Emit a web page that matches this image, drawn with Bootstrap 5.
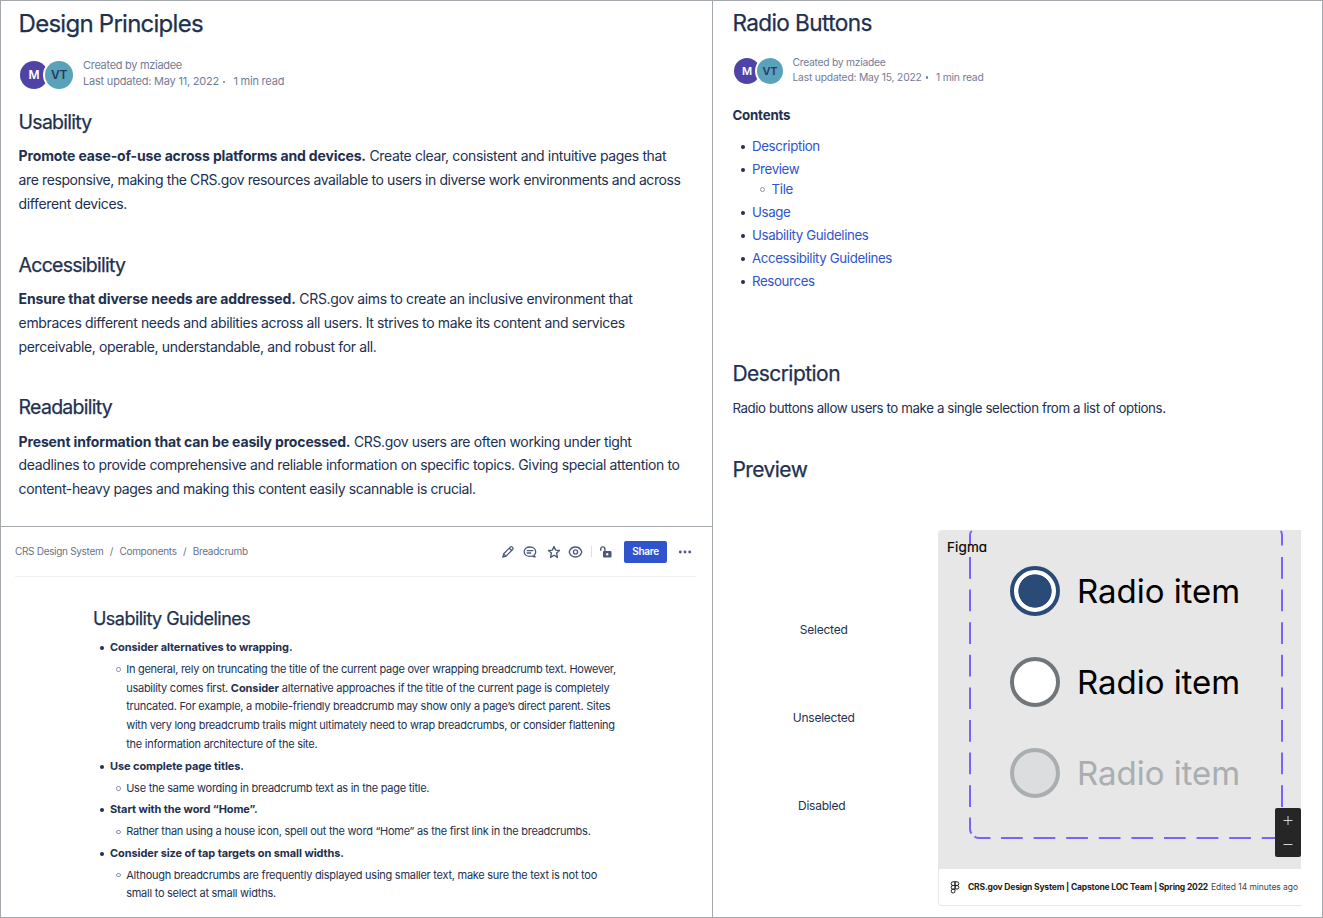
<!DOCTYPE html>
<html lang="en">
<head>
<meta charset="utf-8">
<meta name="viewport" content="width=device-width, initial-scale=1">
<title>CRS Design System</title>
<link href="https://cdn.jsdelivr.net/npm/bootstrap@5.3.0/dist/css/bootstrap.min.css" rel="stylesheet">
<style>
:root{--ink:#22304f;--muted-ink:#737c95;--rule:#a3a9ac;--blue:#2f54cc}
body{font-family:Inter,"Liberation Sans",sans-serif;color:var(--ink);background:#fff}
.board{width:1323px;height:918px;border:1px solid var(--rule);grid-template-columns:712px 1fr;overflow:hidden}
.board p,.board h1,.board h2,.board ul{margin:0}
.pane-left{border-right:1px solid var(--rule)}
.board h1,.board h2{font-weight:400;-webkit-text-stroke:.25px currentColor}
.principles{height:526px;padding:9px 0 0 17.6px;border-bottom:1px solid var(--rule)}
.principles h1{font-size:24px;line-height:28px;letter-spacing:-.031em}
.principles h2{font-size:19.5px;line-height:28px;letter-spacing:-.038em}
.principles section{height:142.7px}
.principles section p{font-size:14px;line-height:23.9px;letter-spacing:-.0255em;padding-top:8.2px;white-space:nowrap}
.principles .snug{letter-spacing:-.0286em}
.principles b{letter-spacing:-.0105em}
.people{height:30px}
.who{width:28px;height:28px;border-radius:50%;font-size:12px;font-weight:600;background:#5aa1ba;color:#243a5e;box-shadow:0 0 0 2px #fff;letter-spacing:-.02em}
.who-m{background:#4f44a6;color:#fff}
.who+.who{margin-left:-3px}
.byline{font-size:11px;line-height:16px;letter-spacing:-.019em;color:var(--muted-ink);white-space:nowrap;margin:-4px 0 0 10px}
.byline .maker{letter-spacing:-.027em}
.dot{display:inline-block;width:2.4px;height:2.4px;border-radius:50%;background:currentColor;margin:0 8px 2px 4px}

.crumb-page{height:390px}
.crumb-bar{height:50px;margin:0 16px 0 14px;border-bottom:1px solid #f0f1f3}
.crumbs{font-size:10px;letter-spacing:-.031em;color:#6a7389}
.crumbs .sep{margin:0 6.4px}
.tools{color:#4b5878}
.tools svg{display:block}
.btn-share{width:43px;height:22px;padding:0;border-radius:2px;border:0;font-size:10px;font-weight:600;letter-spacing:-.031em;background:var(--blue);color:#fff}
.guides{padding:28px 0 0 92px}
.guides h2{font-size:18px;line-height:28px;letter-spacing:-.0295em}
.guides ul{list-style:none;padding:0}
.guides li{position:relative}
.guides>ul{padding-left:17px;padding-top:5px;font-size:11px;line-height:18.86px;letter-spacing:-.0238em;white-space:nowrap}
.guides b{letter-spacing:-.0082em}
.guides ul ul{padding:2.9px 0 2.83px 16.2px}
.bul::before{content:"";position:absolute;left:-10px;top:8px;width:4px;height:4px;border-radius:50%;background:var(--ink)}
.ring::before{content:"";position:absolute;left:-10px;top:7.5px;width:4.4px;height:4.4px;border-radius:50%;border:.8px solid #8c94a6}

.radio-page{padding:8px 0 0 19.4px}
.radio-page h1{font-size:22.6px;line-height:28px;letter-spacing:-.027em}
.radio-page h2{font-size:21px;line-height:28px;letter-spacing:-.026em}
.radio-page .who{width:26px;height:26px;font-size:11px}
.radio-page .byline{font-size:10.3px;line-height:14.8px;margin:-1px 0 0 9.5px}
.radio-page .byline .maker{letter-spacing:-.0252em}
.contents{font-size:13.3px;letter-spacing:-.028em}
.contents b{display:block;line-height:20px;letter-spacing:-.0135em}
.contents ul{list-style:none;padding:0 0 0 19.6px;line-height:20px}
.contents li{position:relative;padding-bottom:3px}
.contents ul ul li{padding:0}
.contents .ring::before{left:-12px;top:8px;width:5px;height:5px}
.contents .bul::before{left:-11px;top:8.6px;width:4px;height:4px}
.contents a{color:var(--blue);text-decoration:none}
.state-names{width:205.6px;padding-right:23px;font-size:12px;letter-spacing:-.02em;padding-top:89.6px}
.state-names div{line-height:20px;height:88.3px;text-align:center}
.embed{width:363px;height:376px;border:solid #e6e7e8;border-width:0 0 1px 1px;border-radius:4px 0 0 4px;overflow:hidden}
.stage{height:339px;background:#e7e7e7;padding:36px 0 0 72px;margin-left:-1px}
.stage .selection{position:absolute;left:0;top:0}
.figma-tag{position:absolute;left:9px;top:7px;font-size:13.5px;line-height:20px;color:#000;font-feature-settings:"cv11";font-weight:400;-webkit-text-stroke:.2px #000;letter-spacing:.01em}
.opt{height:50px;margin-bottom:41px;font-size:33px;color:#000;gap:17px;white-space:nowrap;letter-spacing:-.001em}
.opt span{position:relative;top:1px}
.opt i{width:50px;height:50px;border-radius:50%;border:4px solid #71767a;background:#fff;flex:none}
.opt .on{border-color:#2a4b77;background:radial-gradient(circle,#2a4b77 16.3px,#fff 17px)}
.opt.off{color:#a9aeb1}
.opt.off i{border-color:#a9aeb1;background:#dcddde}
.zoomer{position:absolute;left:337.5px;top:278px;width:25.5px;height:49px;background:#262626;border-radius:2px}
.embed-foot{height:37px;font-size:8.5px;padding-left:11px;color:#444;white-space:nowrap;letter-spacing:-.006em}
.embed-foot b{letter-spacing:-.0211em;color:#222;margin:0 3px 0 8px}
</style>
</head>
<body>
<div class="board d-grid">
  <div class="pane-left">
    <article class="principles">
      <h1>Design Principles</h1>
      <div class="people d-flex align-items-center" style="margin-top:22px">
        <div class="d-flex" style="margin-left:1.4px"><span class="who who-m d-flex align-items-center justify-content-center">M</span><span class="who d-flex align-items-center justify-content-center">VT</span></div>
        <div class="byline"><div class="maker">Created by mziadee</div><div>Last updated: May 11, 2022<span class="dot"></span>1 min read</div></div>
      </div>
      <div style="padding-top:18px">
      <section><h2>Usability</h2><p><b>Promote ease-of-use across platforms and devices.</b> Create clear, consistent and intuitive pages that<br><span class="snug">are responsive, making the CRS.gov resources available to users in diverse work environments and across</span><br>different devices.</p></section>
      <section><h2>Accessibility</h2><p><b>Ensure that diverse needs are addressed.</b> CRS.gov aims to create an inclusive environment that<br>embraces different needs and abilities across all users. It strives to make its content and services<br>perceivable, operable, understandable, and robust for all.</p></section>
      <section><h2>Readability</h2><p><b>Present information that can be easily processed.</b> CRS.gov users are often working under tight<br>deadlines to provide comprehensive and reliable information on specific topics. Giving special attention to<br><span style="letter-spacing:-.0268em">content-heavy pages and making this content easily scannable is crucial.</span></p></section>
      </div>
    </article>
    <article class="crumb-page">
      <header class="crumb-bar d-flex align-items-center justify-content-between">
        <nav class="crumbs">CRS Design System<span class="sep">/</span>Components<span class="sep">/</span>Breadcrumb</nav>
        <div class="tools d-flex align-items-center">
          <svg width="14" height="14" viewBox="0 0 14 14" fill="none" stroke="currentColor" stroke-width="1.25" stroke-linejoin="round"><path d="M1.8 12.2l.9-3.5 6.6-6.6q1-.9 1.9 0l.4.4q.9 1 0 2l-6.5 6.6zM8.3 3.2l2.4 2.4M2.7 8.9l2.3 2.3"/></svg>
          <svg width="14" height="14" viewBox="0 0 14 14" fill="none" stroke="currentColor" stroke-width="1.3" stroke-linecap="round" stroke-linejoin="round" style="margin-left:7.5px"><path d="M11 10.3c1.1-.9 1.7-2 1.7-3.3C12.7 4 10.3 2 7 2S1.200 4 1.200 6.700s2.400 4.700 5.800 4.700q1.300 0 2.300-.4 1 1 2.900.9-.9-.6-1.200-1.600z"/><path d="M4.200 5.700h5.600M4.200 8h3.500"/></svg>
          <svg width="14" height="14" viewBox="0 0 14 14" fill="none" stroke="currentColor" stroke-width="1.35" stroke-linejoin="round" style="margin-left:10px"><path d="M7 1.500l1.600 3.600 3.900.4-2.900 2.600.8 4.300L7 10.300l-3.400 2.100.8-4.300-2.900-2.600 3.900-.4z"/></svg>
          <svg width="15" height="14" viewBox="0 0 15 14" fill="none" stroke="currentColor" stroke-width="1.3" style="margin-left:7px"><path d="M1.200 7C2.300 3.700 4.700 2 7.500 2s5.200 1.700 6.300 5c-1.100 3.300-3.500 5-6.300 5S2.300 10.300 1.200 7z"/><circle cx="7.500" cy="7" r="2.100"/></svg>
          <span style="width:1.5px;height:11px;background:#dcdfe5;margin:0 7px 0 8px"></span>
          <svg width="14" height="14" viewBox="0 0 14 14" fill="none" stroke="currentColor" stroke-width="1.4"><path d="M1.700 5.800V4a2.100 2.100 0 0 1 4.200 0v3"/><path fill="currentColor" fill-rule="evenodd" stroke="none" d="M5 6h6.500a1 1 0 0 1 1 1v4.500a1 1 0 0 1-1 1H5a1 1 0 0 1-1-1V7a1 1 0 0 1 1-1zM8.250 8.100a1.200 1.200 0 1 0 0 2.400 1.200 1.200 0 0 0 0-2.400z"/></svg>
          <button class="btn btn-share" style="margin-left:11px">Share</button>
          <svg width="14" height="6" viewBox="0 0 14 6" fill="currentColor" style="margin:0 4px 0 11px"><circle cx="2.300" cy="3" r="1.400"/><circle cx="7" cy="3" r="1.400"/><circle cx="11.700" cy="3" r="1.400"/></svg>
        </div>
      </header>
      <div class="guides">
        <h2>Usability Guidelines</h2>
        <ul>
          <li class="bul"><b>Consider alternatives to wrapping.</b>
            <ul><li class="ring">In general, rely on truncating the title of the current page over wrapping breadcrumb text. However,<br>usability comes first. <b>Consider</b> alternative approaches if the title of the current page is completely<br>truncated. For example, a mobile-friendly breadcrumb may show only a page’s direct parent. Sites<br>with very long breadcrumb trails might ultimately need to wrap breadcrumbs, or consider flattening<br>the information architecture of the site.</li></ul></li>
          <li class="bul"><b>Use complete page titles.</b>
            <ul><li class="ring">Use the same wording in breadcrumb text as in the page title.</li></ul></li>
          <li class="bul"><b>Start with the word “Home”.</b>
            <ul><li class="ring">Rather than using a house icon, spell out the word “Home” as the first link in the breadcrumbs.</li></ul></li>
          <li class="bul"><b>Consider size of tap targets on small widths.</b>
            <ul><li class="ring">Although breadcrumbs are frequently displayed using smaller text, make sure the text is not too<br>small to select at small widths.</li></ul></li>
        </ul>
      </div>
    </article>
  </div>
  <article class="radio-page">
    <h1>Radio Buttons</h1>
    <div class="people d-flex align-items-center" style="margin-top:18px">
      <div class="d-flex" style="margin:2px 0 0 1.6px"><span class="who who-m d-flex align-items-center justify-content-center">M</span><span class="who d-flex align-items-center justify-content-center">VT</span></div>
      <div class="byline"><div class="maker">Created by mziadee</div><div>Last updated: May 15, 2022<span class="dot"></span>1 min read</div></div>
    </div>
    <div class="contents" style="padding-top:20px">
      <b>Contents</b>
      <ul style="padding-top:11px">
        <li class="bul"><a href="#description">Description</a></li>
        <li class="bul"><a href="#preview">Preview</a><ul><li class="ring"><a href="#tile">Tile</a></li></ul></li>
        <li class="bul"><a href="#usage">Usage</a></li>
        <li class="bul"><a href="#usability">Usability Guidelines</a></li>
        <li class="bul"><a href="#accessibility">Accessibility Guidelines</a></li>
        <li class="bul"><a href="#resources">Resources</a></li>
      </ul>
    </div>
    <h2 id="description" style="padding-top:66px">Description</h2>
    <p style="font-size:13.3px;line-height:20px;letter-spacing:-.03em;padding-top:10px">Radio buttons allow users to make a single selection from a list of options.</p>
    <h2 id="preview" style="padding-top:38px">Preview</h2>
    <div class="d-flex" style="padding-top:46px">
      <div class="state-names"><div>Selected</div><div>Unselected</div><div class="pe-1">Disabled</div></div>
      <div class="embed">
        <div class="stage position-relative">
          <svg class="selection" width="363" height="339" viewBox="938 530 363 339" fill="none" stroke="#7b61ff" stroke-width="2">
            <path d="M971.8 531Q970 532 970 535V545.5M1280.5 531Q1282 532 1282 535V545.5"/>
            <path d="M970 557V818M1282 557V818" stroke-dasharray="21.7 10.9"/>
            <path d="M970 817.8V829Q970 832 971.5 833.5M974.5 836.5Q976 838 979 838H990.5"/>
            <path d="M1001 838H1282" stroke-dasharray="21.7 10.9"/>
          </svg>
          <span class="figma-tag">Figma</span>
          <div class="opt d-flex align-items-center"><i class="on"></i><span>Radio item</span></div>
          <div class="opt d-flex align-items-center"><i></i><span>Radio item</span></div>
          <div class="opt off d-flex align-items-center"><i></i><span>Radio item</span></div>
          <div class="zoomer"><svg class="d-block" width="26" height="49" fill="none" stroke="#d5d5d5" stroke-width="1"><path d="M8.5 12.5h9M13 8v9M8.5 36.5h9"/></svg></div>
        </div>
        <div class="embed-foot d-flex align-items-center">
          <svg width="10" height="13" viewBox="0 0 10 13" fill="none" stroke="#222" stroke-width="1"><path d="M5 .8H3a1.800 1.800 0 0 0 0 3.700h2zM5 .8h2a1.800 1.800 0 0 1 0 3.700H5zM5 4.500H3a1.800 1.800 0 0 0 0 3.700h2zM5 8.200H3A1.900 1.900 0 1 0 5 10z"/><circle cx="7" cy="6.300" r="1.850"/></svg>
          <b>CRS.gov Design System | Capstone LOC Team | Spring 2022</b><span>Edited 14 minutes ago</span>
        </div>
      </div>
    </div>
  </article>
</div>
<script src="https://cdn.jsdelivr.net/npm/bootstrap@5.3.0/dist/js/bootstrap.bundle.min.js"></script>
</body>
</html>
